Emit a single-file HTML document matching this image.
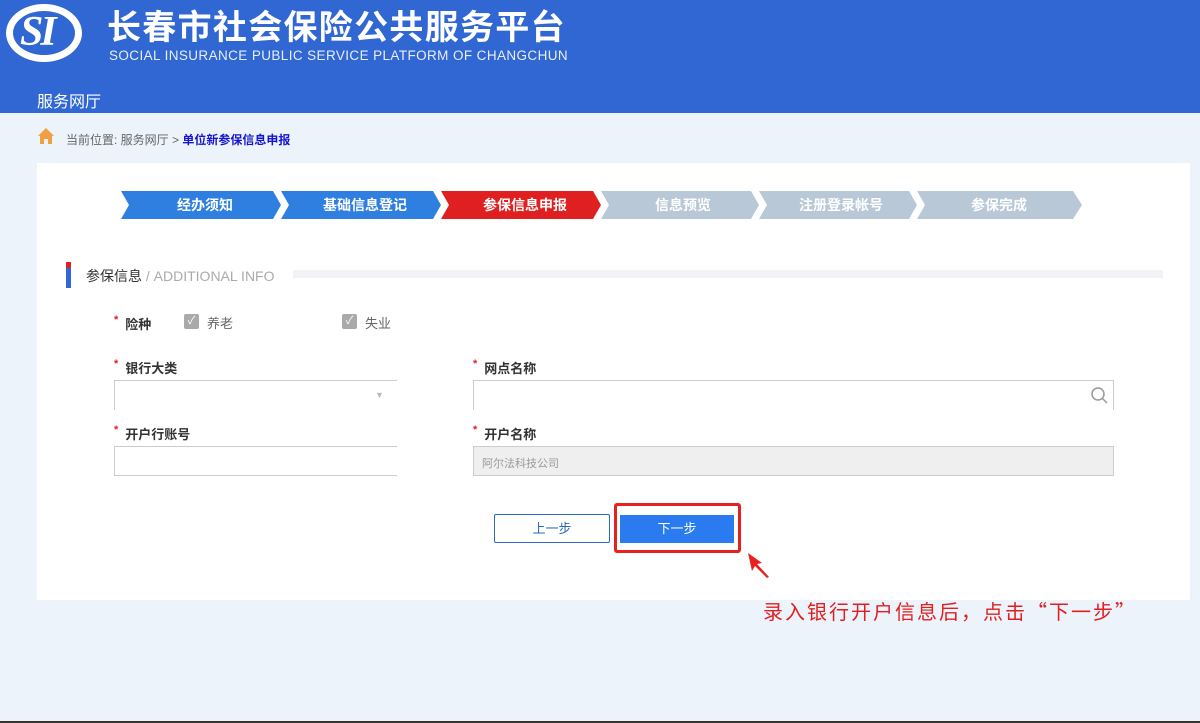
<!DOCTYPE html><html><head><meta charset="utf-8"><style>
*{margin:0;padding:0;box-sizing:border-box}
body{width:1200px;height:723px;background:#ecf3fb;font-family:"Liberation Sans","Noto Sans CJK SC",sans-serif;position:relative;overflow:hidden}
.a{position:absolute}
.hd{left:0;top:0;width:1200px;height:113px;background:#3067d2}
.step{top:191px;height:28px;color:#fff;font-weight:bold;font-size:14px;line-height:28px;text-align:center}
.lbl{font-size:13px;font-weight:bold;color:#333}
.lbl b{color:#e02020;font-size:11px;margin-right:7px;vertical-align:top}
.inp{border:1px solid #ccc;background:#fff}
.cb{width:15px;height:15px;background:#aaa;border-radius:2px;color:#fff;font-size:11px;line-height:15px;text-align:center}
</style></head><body>
<div class="a hd"></div>
<div class="a" style="left:6px;top:4px;width:76px;height:58px;border:7px solid #fff;border-radius:50%;"></div>
<div class="a" style="left:20px;top:8px;color:#fff;font:italic bold 42px 'Liberation Serif',serif;letter-spacing:-3px">SI</div>
<div class="a" style="left:107px;top:0px;color:#fff;font-size:34px;font-weight:bold;letter-spacing:1.3px">长春市社会保险公共服务平台</div>
<div class="a" style="left:109px;top:48px;color:#e8eefa;font-size:13.5px;letter-spacing:0.4px">SOCIAL INSURANCE PUBLIC SERVICE PLATFORM OF CHANGCHUN</div>
<div class="a" style="left:37px;top:88px;color:#fff;font-size:16px">服务网厅</div>
<svg class="a" style="left:37px;top:127px" width="18" height="18"><path d="M9 1 L1 9 L3 9 L3 17 L7 17 L7 12 L11 12 L11 17 L15 17 L15 9 L17 9Z" fill="#f0a040"/></svg>
<div class="a" style="left:66px;top:131px;font-size:12px;color:#666">当前位置: 服务网厅 &gt; <span style="color:#1515d0;font-weight:bold">单位新参保信息申报</span></div>
<div class="a" style="left:37px;top:163px;width:1153px;height:437px;background:#fff"></div>
<svg class="a" style="left:121px;top:191px" width="962" height="28">
<polygon points="0,0 152,0 160,14 152,28 0,28 8,14" fill="#2f7fe0"/>
<polygon points="160,0 312,0 320,14 312,28 160,28 168,14" fill="#2f7fe0"/>
<polygon points="320,0 472,0 480,14 472,28 320,28 328,14" fill="#e02020"/>
<polygon points="480,0 630,0 638,14 630,28 480,28 488,14" fill="#b8c8d6"/>
<polygon points="638,0 788,0 796,14 788,28 638,28 646,14" fill="#b8c8d6"/>
<polygon points="796,0 952,0 961,14 952,28 796,28 804,14" fill="#b8c8d6"/>
<g stroke="#fff" stroke-width="2" fill="none"><path d="M155,0 L163,14 L155,28"/><path d="M315,0 L323,14 L315,28"/><path d="M475,0 L483,14 L475,28"/><path d="M633,0 L641,14 L633,28"/><path d="M791,0 L799,14 L791,28"/></g>
</svg>
<div class="a step" style="left:125px;width:160px">经办须知</div>
<div class="a step" style="left:285px;width:160px">基础信息登记</div>
<div class="a step" style="left:445px;width:160px">参保信息申报</div>
<div class="a step" style="left:603px;width:160px">信息预览</div>
<div class="a step" style="left:761px;width:160px">注册登录帐号</div>
<div class="a step" style="left:919px;width:160px">参保完成</div>
<div class="a" style="left:66px;top:262px;width:5px;height:26px;background:#3067d2"></div>
<div class="a" style="left:66px;top:262px;width:5px;height:6px;background:#e02020"></div>
<div class="a" style="left:86px;top:266px;font-size:14px;color:#333">参保信息 <span style="color:#aaa">/ ADDITIONAL INFO</span></div>
<div class="a" style="left:293px;top:270px;width:870px;height:8px;background:#f1f3f6"></div>
<div class="a lbl" style="left:114px;top:314px"><b>*</b>险种</div>
<div class="a cb" style="left:184px;top:314px">✓</div><div class="a" style="left:207px;top:313px;font-size:13px;color:#666">养老</div>
<div class="a cb" style="left:342px;top:314px">✓</div><div class="a" style="left:365px;top:313px;font-size:13px;color:#666">失业</div>
<div class="a lbl" style="left:114px;top:358px"><b>*</b>银行大类</div>
<div class="a lbl" style="left:473px;top:358px"><b>*</b>网点名称</div>
<div class="a inp" style="left:114px;top:380px;width:283px;height:30px;border-bottom:none;border-right:none"></div>
<div class="a" style="left:375px;top:390px;font-size:9px;color:#bbb">▼</div>
<div class="a inp" style="left:473px;top:380px;width:641px;height:30px;border-bottom:none"></div>
<svg class="a" style="left:1090px;top:386px" width="20" height="20"><circle cx="8" cy="8" r="6" stroke="#999" stroke-width="1.5" fill="none"/><path d="M12.5 12.5 L17 17" stroke="#999" stroke-width="1.5"/></svg>
<div class="a lbl" style="left:114px;top:424px"><b>*</b>开户行账号</div>
<div class="a lbl" style="left:473px;top:424px"><b>*</b>开户名称</div>
<div class="a inp" style="left:114px;top:446px;width:283px;height:30px;border-right:none"></div>
<div class="a inp" style="left:473px;top:446px;width:641px;height:30px;background:#efefef;font-size:11px;color:#999;padding:8px 8px">阿尔法科技公司</div>
<div class="a" style="left:494px;top:514px;width:116px;height:29px;border:1px solid #2a6ac0;border-radius:2px;color:#2a6ac0;font-size:13px;text-align:center;line-height:27px">上一步</div>
<div class="a" style="left:614px;top:503px;width:127px;height:50px;border:3px solid #e82020;border-radius:3px"></div>
<div class="a" style="left:620px;top:515px;width:114px;height:28px;background:#2a7af0;color:#fff;font-size:13px;text-align:center;line-height:28px">下一步</div>
<svg class="a" style="left:742px;top:550px" width="30" height="30"><path d="M6 3 L20 13 L15 14 L27 27 L25 28 L13 16 L10 21Z" fill="#e82020"/></svg>
<div class="a" style="left:763px;top:596px;font-size:20px;color:#e02020;font-family:'Noto Sans CJK SC',sans-serif;letter-spacing:2px">录入银行开户信息后，点击“下一步”</div>
<div class="a" style="left:0;top:721px;width:1200px;height:2px;background:#333"></div>
</body></html>
